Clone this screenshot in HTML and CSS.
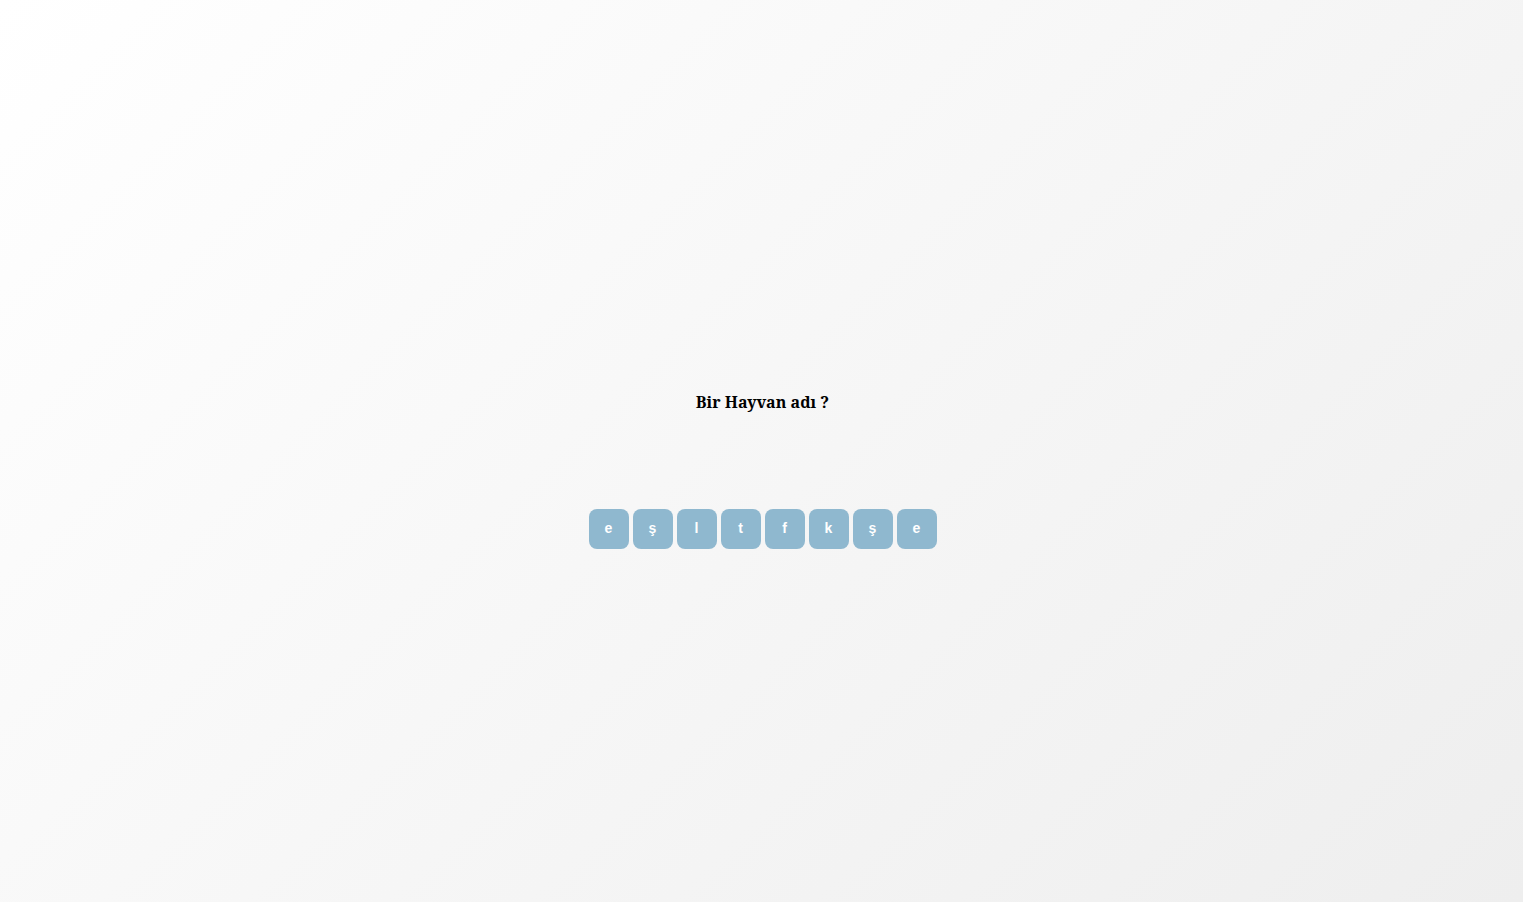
FILE: index.html
```html
<!DOCTYPE html>
<html lang="tr">
<head>
<meta charset="utf-8">
<title>Bir Hayvan adı ?</title>
<link rel="stylesheet" href="styles.css">
</head>
<body>
<main class="game">
  <h1 class="question">Bir Hayvan adı ?</h1>
  <div class="letters">
    <button class="letter">e</button>
    <button class="letter">ş</button>
    <button class="letter">l</button>
    <button class="letter">t</button>
    <button class="letter">f</button>
    <button class="letter">k</button>
    <button class="letter">ş</button>
    <button class="letter">e</button>
  </div>
</main>
</body>
</html>
```
FILE: styles.css
```css
html, body {
  margin: 0;
  height: 100%;
}
body {
  background: linear-gradient(135deg, #ffffff 0%, #eeeeee 100%);
  font-family: "Noto Serif", "DejaVu Serif", serif;
}
.game {
  height: 100%;
  display: flex;
  flex-direction: column;
  align-items: center;
  padding-top: 390px;
  padding-left: 2px;
  box-sizing: border-box;
}
.question {
  margin: 0;
  font-size: 16px;
  line-height: 24px;
  font-weight: bold;
  color: #000;
}
.letters {
  margin-top: 95px;
  display: flex;
  gap: 4px;
}
.letter {
  width: 40px;
  height: 40px;
  border: none;
  border-radius: 8px;
  background: #8fb8cf;
  color: #fff;
  font-family: "Liberation Sans", Arial, sans-serif;
  font-weight: bold;
  font-size: 14px;
  line-height: 38px;
  padding: 0 0 2px;
}
```
